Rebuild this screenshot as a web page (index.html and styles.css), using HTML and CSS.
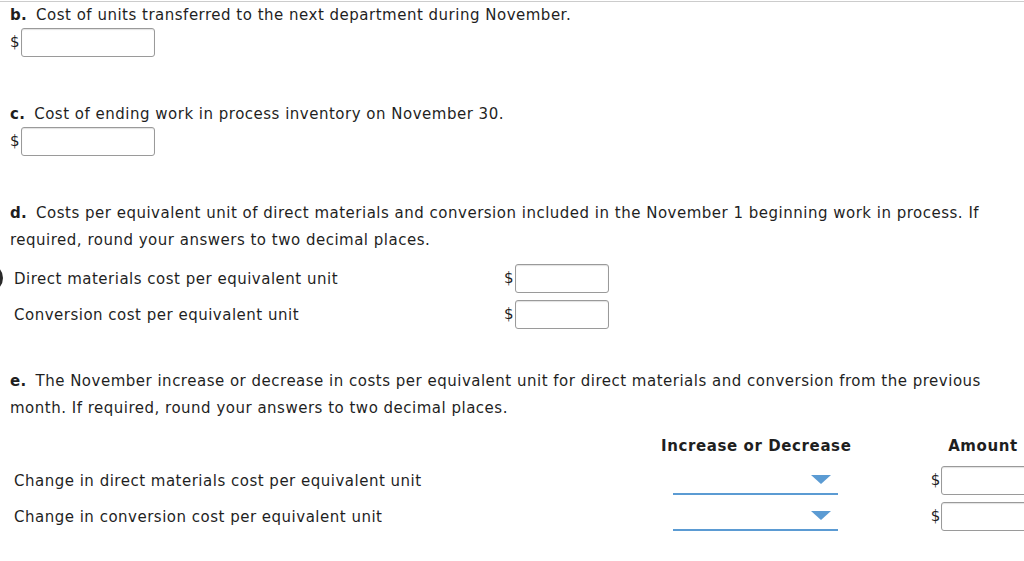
FILE: index.html
```html
<!DOCTYPE html>
<html lang="en">
<head>
<meta charset="utf-8">
<title>Process costing questions</title>
<link rel="stylesheet" href="styles.css">
</head>
<body>
<div class="page">
  <section class="part part-b">
    <p class="q"><b class="tag">b.</b>Cost of units transferred to the next department during November.</p>
    <div class="money"><span class="cur">$</span><span class="box"></span></div>
  </section>

  <section class="part part-c">
    <p class="q"><b class="tag">c.</b>Cost of ending work in process inventory on November 30.</p>
    <div class="money"><span class="cur">$</span><span class="box"></span></div>
  </section>

  <section class="part part-d">
    <p class="q tall"><b class="tag">d.</b><span>Costs per equivalent unit of direct materials and conversion included in the November 1 beginning work in process. If</span><br><span>required, round your answers to two decimal places.</span></p>
    <div class="drows">
      <div class="drow">
        <span class="marker"></span>
        <span class="label">Direct materials cost per equivalent unit</span>
        <div class="money"><span class="cur">$</span><span class="box small"></span></div>
      </div>
      <div class="drow">
        <span class="label">Conversion cost per equivalent unit</span>
        <div class="money"><span class="cur">$</span><span class="box small"></span></div>
      </div>
    </div>
  </section>

  <section class="part part-e">
    <p class="q tall"><b class="tag">e.</b><span>The November increase or decrease in costs per equivalent unit for direct materials and conversion from the previous</span><br><span>month. If required, round your answers to two decimal places.</span></p>
    <div class="etable">
      <div class="eh"></div>
      <div class="eh">Increase or Decrease</div>
      <div class="eh">Amount</div>

      <div class="ecell label">Change in direct materials cost per equivalent unit</div>
      <div class="ecell"><span class="select"><span class="tri"></span></span></div>
      <div class="ecell amt"><span class="cur">$</span><span class="box small"></span></div>

      <div class="ecell label">Change in conversion cost per equivalent unit</div>
      <div class="ecell"><span class="select"><span class="tri"></span></span></div>
      <div class="ecell amt"><span class="cur">$</span><span class="box small"></span></div>
    </div>
  </section>
</div>
</body>
</html>
```

FILE: styles.css
```css
html, body {
  margin: 0;
  padding: 0;
  overflow: hidden;
  background: #ffffff;
}

body {
  font-family: "DejaVu Sans", Verdana, sans-serif;
  font-size: 15px;
  letter-spacing: 0.5px;
  color: #1f1f1f;
  width: 1024px;
  height: 561px;
}

.page {
  margin-top: 1px;
  border-top: 1px solid #cccccc;
  padding-left: 10px;
}

.q {
  margin: 0;
  line-height: 26px;
  white-space: nowrap;
}

.q.tall {
  line-height: 27px;
}

.tag {
  font-weight: bold;
  letter-spacing: 0.3px;
  margin-right: 9px;
}

.money {
  display: flex;
  align-items: center;
}

.cur {
  display: inline-block;
  margin-right: 1px;
  line-height: 1;
  letter-spacing: 0;
}

.box {
  display: inline-block;
  box-sizing: border-box;
  width: 134px;
  height: 29px;
  border: 1px solid #9a9a9a;
  border-radius: 3px;
  box-shadow: inset 0 1px 1px rgba(0, 0, 0, 0.12);
  background: #fff;
}

.box.small {
  width: 94px;
}

.part-c {
  margin-top: 44px;
}

.part-d {
  margin-top: 44px;
}

.drows {
  margin-top: 10px;
  display: flex;
  flex-direction: column;
  gap: 7px;
}

.drow {
  position: relative;
  display: flex;
  align-items: center;
  height: 29px;
}

.drow .label {
  width: 494px;
  padding-left: 4px;
  box-sizing: border-box;
}

.marker {
  position: absolute;
  left: -35px;
  top: 0;
  width: 22px;
  height: 22px;
  border: 3px solid #2a2a2a;
  border-radius: 50%;
}

.part-e {
  margin-top: 39px;
}

.etable {
  margin-top: 13px;
  display: grid;
  grid-template-columns: 651px 189px 266px;
  grid-template-rows: 24px 29px 29px;
  row-gap: 7px;
}

.eh {
  font-weight: bold;
  letter-spacing: 0.6px;
  text-align: center;
  white-space: nowrap;
  line-height: 22px;
}

.ecell {
  display: flex;
  align-items: center;
}

.ecell.label {
  padding-left: 4px;
}

.ecell.amt {
  justify-content: center;
}

.select {
  position: relative;
  display: block;
  box-sizing: border-box;
  margin-left: 12px;
  width: 165px;
  height: 29px;
  border-bottom: 2px solid #5b9bd3;
}

.tri {
  position: absolute;
  right: 7px;
  top: 9px;
  width: 0;
  height: 0;
  border-left: 10px solid transparent;
  border-right: 10px solid transparent;
  border-top: 9px solid #5b9bd3;
}
```
